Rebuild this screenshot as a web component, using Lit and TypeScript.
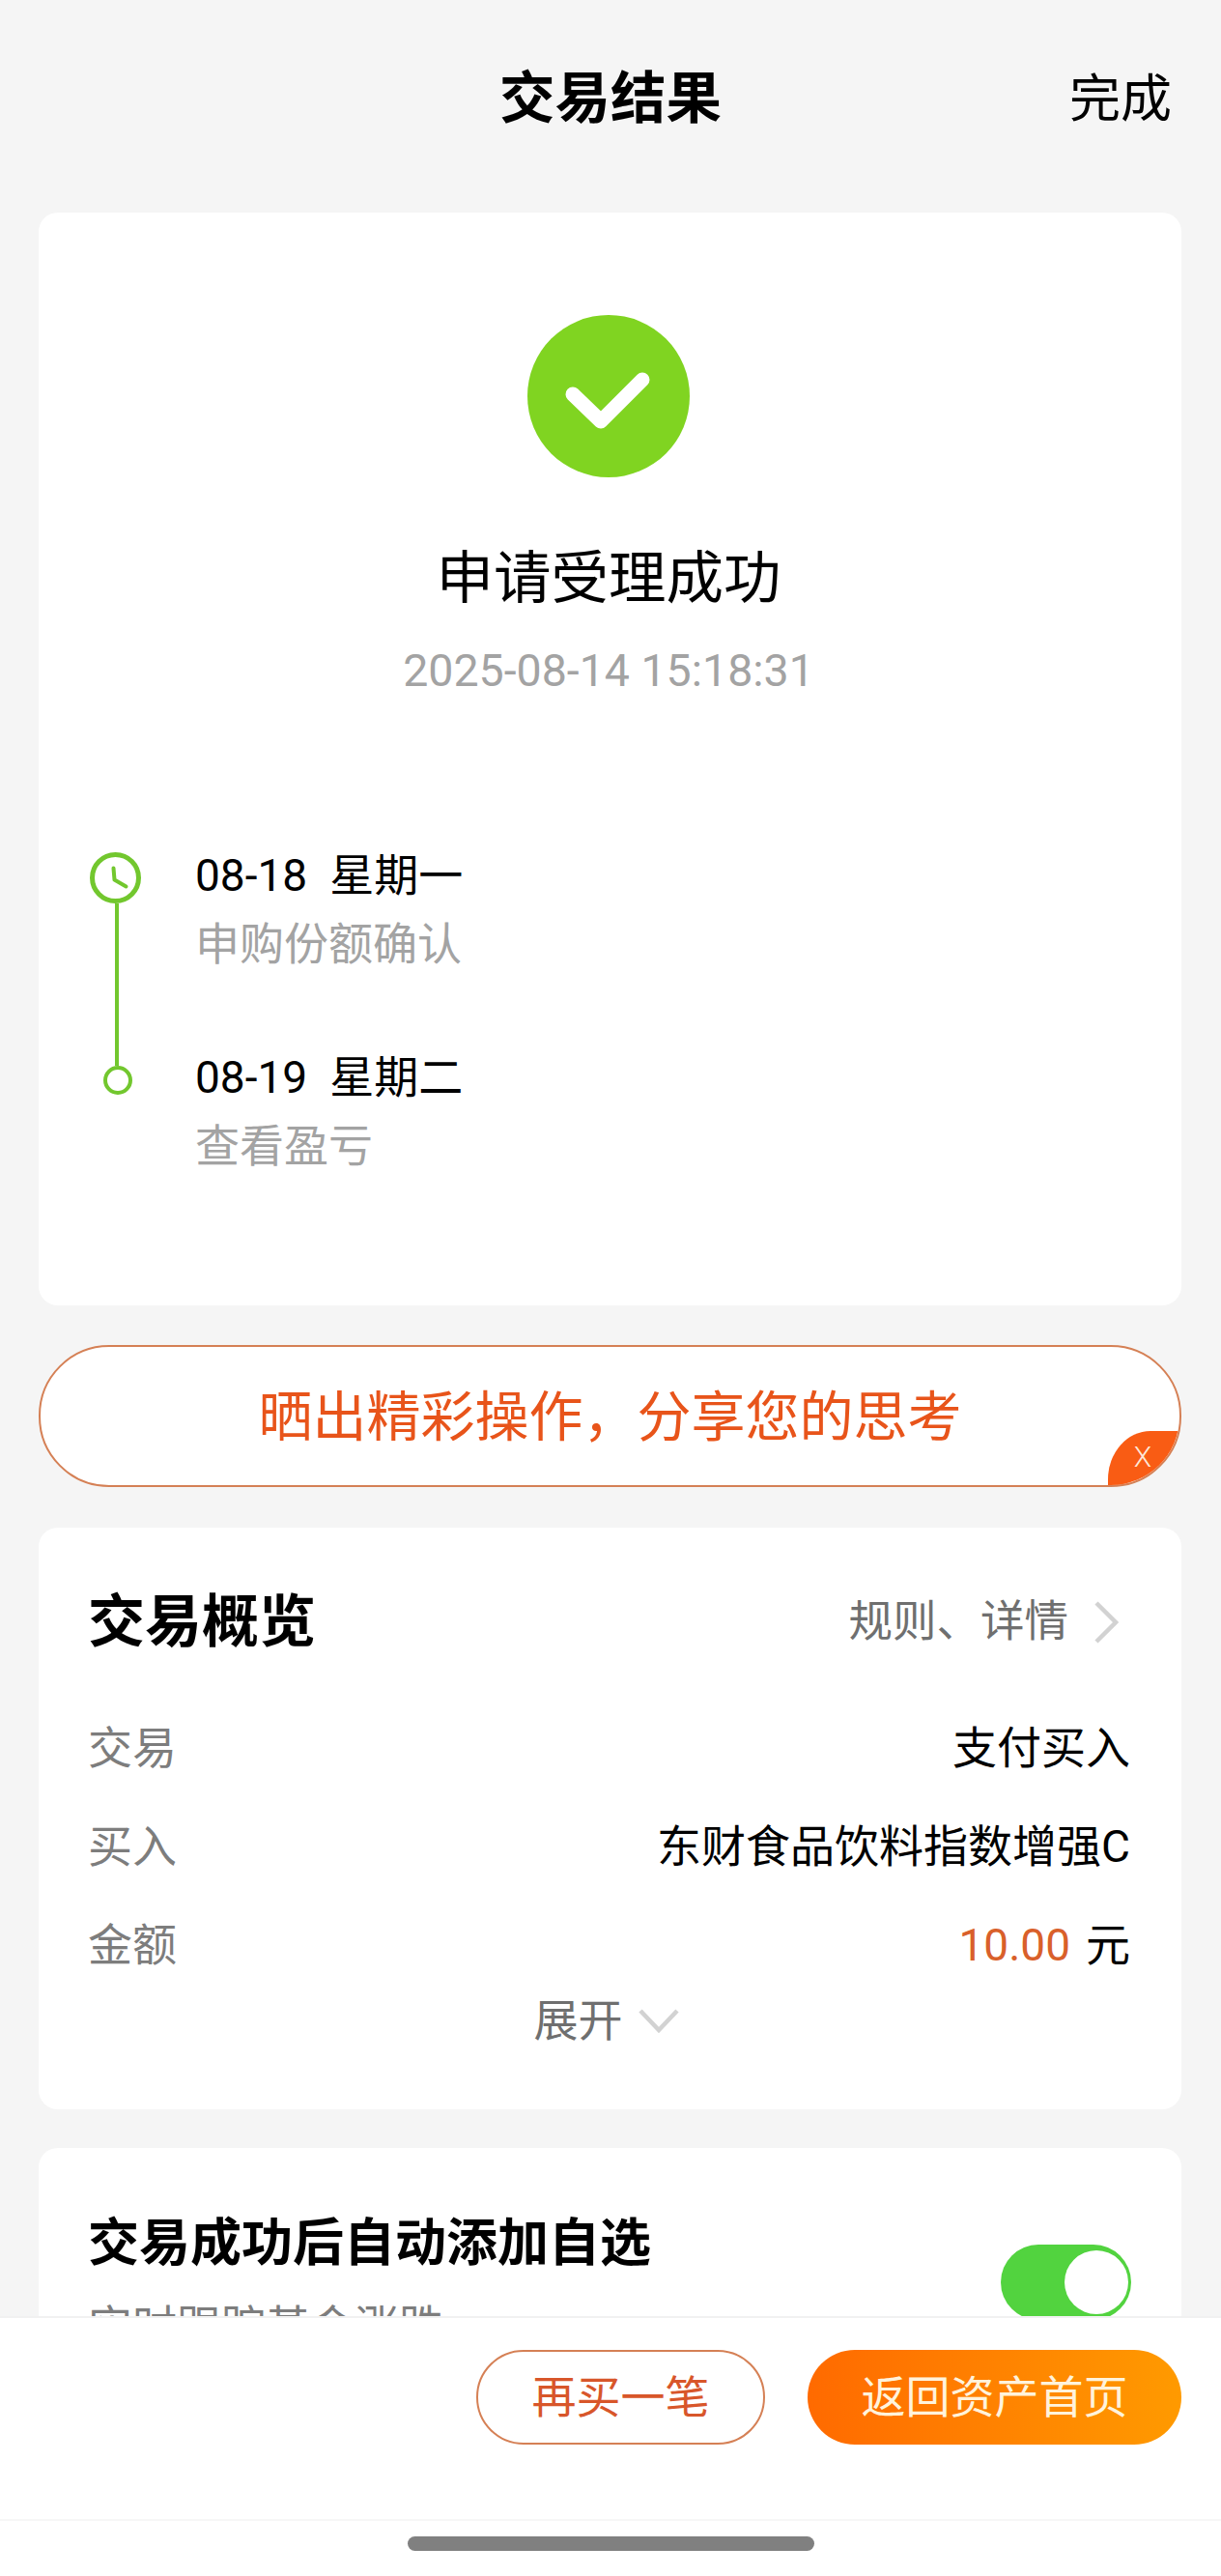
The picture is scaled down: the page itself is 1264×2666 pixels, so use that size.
// app.ts
import { LitElement, css, html } from "lit";
import { customElement } from "lit/decorators.js";

const chevron = (dir: "right" | "down") =>
  dir === "right"
    ? html`<svg class="chev-right" viewBox="0 0 26 44" fill="none"><path d="M3 2l20 20L3 42" stroke="#d2d2d2" stroke-width="4.5"/></svg>`
    : html`<svg class="chev-down" viewBox="0 0 42 26" fill="none"><path d="M2 3l19 20L40 3" stroke="#d2d2d2" stroke-width="4.5"/></svg>`;

@customElement("app-root")
export class AppRoot extends LitElement {
  static styles = css`
    :host {
      display: flex;
      flex-direction: column;
      width: 1264px;
      height: 2666px;
      overflow: hidden;
      background: #f5f5f5;
      color: #000;
      font-family: Roboto, "Noto Sans CJK SC", sans-serif;
      font-size: 46px;
      line-height: 60px;
    }

    .scroll {
      flex: 1;
      min-height: 0;
      overflow: hidden;
    }

    /* header */
    .header {
      display: grid;
      grid-template-columns: 1fr auto 1fr;
      align-items: center;
      height: 206px;
    }
    .header h1 {
      grid-column: 2;
      margin: 0;
      font-size: 57.5px;
      font-weight: 700;
      line-height: 70px;
    }
    .done {
      justify-self: end;
      margin-right: 51px;
      font-size: 53px;
      line-height: 70px;
    }

    .card {
      margin: 0 41px 0 40px;
      background: #fff;
      border-radius: 20px;
    }

    /* result card */
    .result {
      height: 1131px;
      margin-top: 14px;
      padding: 106px 3px 0 0;
      box-sizing: border-box;
    }
    .success {
      display: block;
      width: 168px;
      height: 168px;
      margin: 0 auto;
    }
    .result-title {
      margin-top: 70px;
      font-size: 59.5px;
      line-height: 70px;
      text-align: center;
    }
    .result-time {
      margin-top: 30px;
      font-size: 46.5px;
      color: #a3a3a3;
      text-align: center;
    }

    .timeline {
      display: flex;
      gap: 55px;
      margin-top: 151px;
      padding-left: 54px;
    }
    .rail {
      display: flex;
      flex-direction: column;
      align-items: center;
      width: 53px;
      height: 251px;
      margin-top: 7px;
    }
    .rail .clock {
      flex: none;
      width: 53px;
      height: 53px;
      margin-right: 2px;
    }
    .rail .line {
      flex: 1;
      width: 4px;
      background: #72c72e;
    }
    .rail .dot {
      flex: none;
      width: 30px;
      height: 30px;
      margin-left: 3px;
      box-sizing: border-box;
      border: 4px solid #72c72e;
      border-radius: 50%;
    }
    .steps {
      padding-top: 1px;
    }
    .step + .step {
      margin-top: 78px;
    }
    .step-date {
      display: flex;
      gap: 23px;
    }
    .step-note {
      margin-top: 11px;
      color: #a3a3a3;
    }

    /* share banner */
    .banner {
      position: relative;
      overflow: hidden;
      display: flex;
      align-items: center;
      justify-content: center;
      height: 147px;
      margin: 41px 41px 0 40px;
      padding-top: 2px;
      box-sizing: border-box;
      background: #fff;
      border: 2px solid #d58055;
      border-radius: 73px;
      color: #e8541a;
      font-size: 56px;
      line-height: 70px;
    }
    .banner .close {
      position: absolute;
      right: -2px;
      bottom: -2px;
      display: flex;
      align-items: center;
      justify-content: center;
      width: 76px;
      height: 58px;
      padding: 0 4px 4px 0;
      box-sizing: border-box;
      background: #f95c14;
      border-top-left-radius: 44px 50px;
      color: #fde8d8;
      font-size: 30px;
      font-weight: 300;
      line-height: 30px;
    }

    /* overview card */
    .overview {
      margin-top: 42px;
      padding: 63px 53px 62px 51px;
    }
    .title-row {
      display: flex;
      align-items: center;
      justify-content: space-between;
    }
    .card-title {
      font-size: 59px;
      font-weight: 700;
      line-height: 70px;
    }
    .links {
      display: flex;
      align-items: center;
      gap: 26px;
      margin-right: 12px;
      color: #6f6f6f;
      font-size: 45.5px;
    }
    .chev-right {
      width: 26px;
      height: 44px;
    }
    .rows {
      display: flex;
      flex-direction: column;
      gap: 42px;
      margin-top: 65px;
    }
    .row {
      display: flex;
      justify-content: space-between;
    }
    .row .label {
      color: #7d7d7d;
    }
    .amount {
      color: #d9602a;
      margin-right: 16px;
    }
    .expand {
      display: flex;
      align-items: center;
      justify-content: center;
      gap: 16px;
      margin-top: 18px;
      padding-right: 6px;
      color: #6f6f6f;
    }
    .chev-down {
      width: 42px;
      height: 26px;
    }

    /* watchlist card */
    .watch {
      display: flex;
      justify-content: space-between;
      margin-top: 40px;
      padding: 64px 52px 60px 51px;
    }
    .watch .card-title {
      font-size: 53px;
    }
    .watch-note {
      margin-top: 21px;
      color: #7d7d7d;
    }
    .toggle {
      flex: none;
      display: flex;
      align-items: center;
      justify-content: flex-end;
      width: 135px;
      height: 78px;
      margin-top: 36px;
      padding-right: 3px;
      box-sizing: border-box;
      background: #52d33f;
      border-radius: 39px;
    }
    .toggle span {
      width: 66px;
      height: 66px;
      background: #fff;
      border-radius: 50%;
    }

    /* bottom bar */
    .bottom {
      flex: none;
      background: #fff;
      border-top: 2px solid #f1f1f1;
    }
    .actions {
      display: flex;
      justify-content: flex-end;
      gap: 44px;
      height: 210px;
      padding: 33px 41px 0 0;
      box-sizing: border-box;
      border-bottom: 2px solid #f7f7f7;
    }
    .btn {
      display: flex;
      align-items: center;
      justify-content: center;
      height: 98px;
      box-sizing: border-box;
      border-radius: 49px;
    }
    .btn.again {
      width: 299px;
      background: #fff;
      border: 2px solid #d58055;
      color: #d8562a;
    }
    .btn.home {
      width: 387px;
      background: linear-gradient(90deg, #ff6a00, #ff9a00);
      color: #fff3dc;
    }
    .indicator-bar {
      display: flex;
      justify-content: center;
      height: 57px;
      padding-top: 16px;
      box-sizing: border-box;
    }
    .indicator {
      width: 421px;
      height: 15px;
      background: #808080;
      border-radius: 8px;
    }
  `;

  render() {
    return html`
      <div class="scroll">
        <div class="header">
          <h1>交易结果</h1>
          <div class="done">完成</div>
        </div>

        <section class="card result">
          <svg class="success" viewBox="0 0 168 168">
            <circle cx="84" cy="84" r="84" fill="#80d421" />
            <path d="M47 82l29 28 43-43" fill="none" stroke="#fff" stroke-width="15" stroke-linecap="round" stroke-linejoin="round" />
          </svg>
          <div class="result-title">申请受理成功</div>
          <div class="result-time">2025-08-14 15:18:31</div>

          <div class="timeline">
            <div class="rail">
              <svg class="clock" viewBox="0 0 53 53" fill="none">
                <circle cx="26.5" cy="26.5" r="24" stroke="#72c72e" stroke-width="5" />
                <path d="M24.5 16.5l1 12 12 7" stroke="#72c72e" stroke-width="4" stroke-linecap="round" stroke-linejoin="round" />
              </svg>
              <div class="line"></div>
              <div class="dot"></div>
            </div>
            <div class="steps">
              <div class="step">
                <div class="step-date"><span>08-18</span><span>星期一</span></div>
                <div class="step-note">申购份额确认</div>
              </div>
              <div class="step">
                <div class="step-date"><span>08-19</span><span>星期二</span></div>
                <div class="step-note">查看盈亏</div>
              </div>
            </div>
          </div>
        </section>

        <div class="banner">
          晒出精彩操作，分享您的思考
          <span class="close">X</span>
        </div>

        <section class="card overview">
          <div class="title-row">
            <div class="card-title">交易概览</div>
            <div class="links">规则、详情 ${chevron("right")}</div>
          </div>
          <div class="rows">
            <div class="row"><span class="label">交易</span><span>支付买入</span></div>
            <div class="row"><span class="label">买入</span><span>东财食品饮料指数增强C</span></div>
            <div class="row">
              <span class="label">金额</span>
              <span><span class="amount">10.00</span>元</span>
            </div>
          </div>
          <div class="expand">展开 ${chevron("down")}</div>
        </section>

        <section class="card watch">
          <div>
            <div class="card-title">交易成功后自动添加自选</div>
            <div class="watch-note">实时跟踪基金涨跌</div>
          </div>
          <div class="toggle"><span></span></div>
        </section>
      </div>

      <div class="bottom">
        <div class="actions">
          <div class="btn again">再买一笔</div>
          <div class="btn home">返回资产首页</div>
        </div>
        <div class="indicator-bar"><div class="indicator"></div></div>
      </div>
    `;
  }
}
